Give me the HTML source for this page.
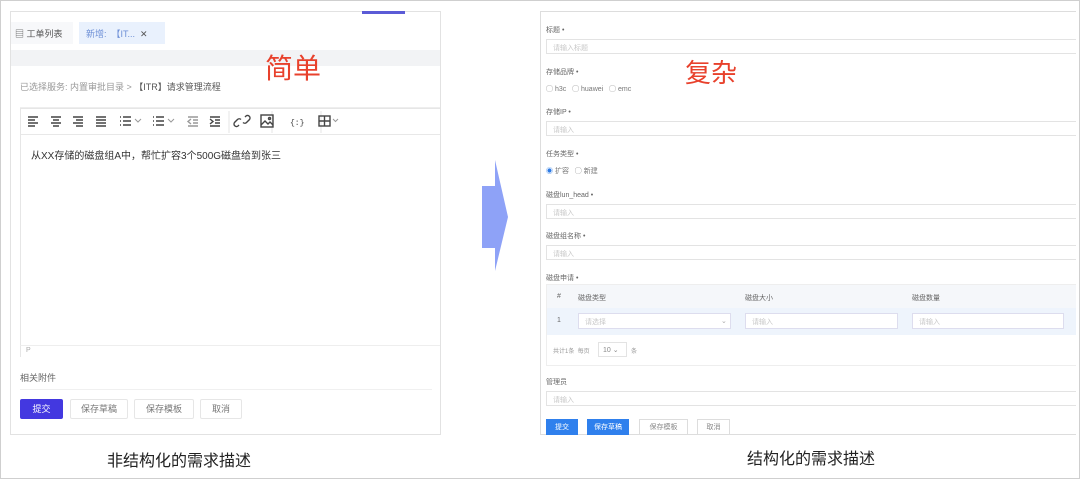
<!DOCTYPE html>
<html><head><meta charset="utf-8"><style>
*{box-sizing:border-box;margin:0;padding:0}
body{width:1080px;height:479px;background:#fff;position:relative;overflow:hidden;font-family:"Liberation Sans","Noto Sans CJK SC",sans-serif;color:#555}
.a{position:absolute}
.frame{left:0;top:0;width:1080px;height:479px;border:1px solid #cfcfcf}
.lp{left:10px;top:11px;width:431px;height:424px;border:1px solid #e2e2e2;background:#fff}
.rp{left:540px;top:11px;width:536px;height:424px;border:1px solid #ddd;border-right:none;background:#fff}
.t{font-size:8px;color:#666;white-space:nowrap}
.inp{height:15px;border:1px solid #e3e3e3;border-right:none;left:546px;width:530px;background:#fff}
.ph{font-size:7px;color:#c8c8c8;position:absolute;left:6px;top:3px}
.btn{height:20px;border:1px solid #e6e6e6;border-radius:2px;font-size:9px;color:#777;text-align:center;line-height:18px}
.rb{height:16px;font-size:7px;text-align:center;line-height:16px;border:1px solid #ddd;color:#888}
</style></head><body>
<div class="a frame"></div>
<!-- left panel -->
<div class="a lp"></div>
<div class="a" style="left:362px;top:11px;width:43px;height:3px;background:#5b5bd6"></div>
<div class="a" style="left:11px;top:22px;width:62px;height:22px;background:#f7f8fa"></div>
<div class="a t" style="left:15px;top:27px;font-size:9px;color:#555">▤ 工单列表</div>
<div class="a" style="left:79px;top:22px;width:86px;height:22px;background:#e9f1fd"></div>
<div class="a t" style="left:86px;top:27px;font-size:9px;color:#6d8fd6">新增: &nbsp;【IT... &nbsp;<span style="color:#555">✕</span></div>
<div class="a" style="left:11px;top:50px;width:429px;height:16px;background:#f2f3f5"></div>
<div class="a" style="left:265px;top:50px;font-size:28px;color:#e8412c;font-family:'Noto Sans CJK SC',sans-serif;line-height:34px">简单</div>
<div class="a t" style="left:20px;top:80px;font-size:9px;color:#999">已选择服务: 内置审批目录 &gt; <span style="color:#555">【ITR】请求管理流程</span></div>
<div class="a" style="left:20px;top:98px;width:420px;height:10px;border-bottom:1px solid #eee"></div>
<div class="a" style="left:20px;top:108px;width:420px;height:238px;border:1px solid #e6e6e6;border-right:none"></div>
<div class="a" style="left:21px;top:109px;width:419px;height:26px;border-bottom:1px solid #e8e8e8"></div>
<svg class="a" style="left:20px;top:108px" width="420" height="28" viewBox="0 0 420 28" stroke="#444" stroke-width="1.4" fill="none">
<g transform="translate(8,8)"><path d="M0 1h10M0 4h7M0 7h10M0 10h7"/></g>
<g transform="translate(31,8)"><path d="M0 1h10M2 4h6M0 7h10M2 10h6"/></g>
<g transform="translate(53,8)"><path d="M0 1h10M3 4h7M0 7h10M3 10h7"/></g>
<g transform="translate(76,8)"><path d="M0 1h10M0 4h10M0 7h10M0 10h10"/></g>
<g transform="translate(100,8)"><path d="M0 1h1M3 1h8M0 5h1M3 5h8M0 9h1M3 9h8"/><path d="M15 3l3 3 3-3" stroke="#999" stroke-width="1"/></g>
<g transform="translate(133,8)"><path d="M0 1h1M3 1h8M0 5h1M3 5h8M0 9h1M3 9h8"/><path d="M15 3l3 3 3-3" stroke="#999" stroke-width="1"/></g>
<g transform="translate(168,8)" stroke="#999"><path d="M0 1h10M5 4h5M5 7h5M0 10h10M3 3L0 5.5 3 8"/></g>
<g transform="translate(190,8)"><path d="M0 1h10M5 4h5M5 7h5M0 10h10M0 3l3 2.5L0 8"/></g>
<path d="M209 3v22M252 3v22M301 3v22" stroke="#e5e5e5" stroke-width="1"/>
<g transform="translate(216,6)"><path d="M3 11l-1 1a2.5 2.5 0 0 1-3.5-3.5l3-3a2.5 2.5 0 0 1 3.5 0M9 3l1-1a2.5 2.5 0 0 1 3.5 3.5l-3 3a2.5 2.5 0 0 1-3.5 0"/></g>
<g transform="translate(241,7)"><rect x="0" y="0" width="12" height="12"/><path d="M0 10l4-4 3 3 2-2 3 3"/><circle cx="8.5" cy="3.5" r="1"/></g>
<text x="270" y="17" font-size="8" fill="#444" stroke="none" font-family="Liberation Mono">{:}</text>
<g transform="translate(299,8)"><rect x="0" y="0" width="11" height="10"/><path d="M0 5h11M5.5 0v10"/><path d="M14 3l2.5 2.5L19 3" stroke="#999" stroke-width="1"/></g>
</svg>
<div class="a t" style="left:31px;top:147px;font-size:10px;color:#333">从XX存储的磁盘组A中，帮忙扩容3个500G磁盘给到张三</div>
<div class="a" style="left:20px;top:345px;width:420px;height:12px;border-top:1px solid #eee;border-left:1px solid #e6e6e6"></div>
<div class="a t" style="left:26px;top:347px;font-size:7px;color:#aaa">P</div>
<div class="a t" style="left:20px;top:371px;font-size:9px;color:#666">相关附件</div>
<div class="a" style="left:20px;top:389px;width:412px;border-top:1px solid #f0f0f0"></div>
<div class="a btn" style="left:20px;top:399px;width:43px;background:#4338e0;border-color:#4338e0;color:#fff">提交</div>
<div class="a btn" style="left:70px;top:399px;width:58px">保存草稿</div>
<div class="a btn" style="left:134px;top:399px;width:60px">保存模板</div>
<div class="a btn" style="left:200px;top:399px;width:42px">取消</div>
<div class="a" style="left:107px;top:447px;font-size:16px;color:#222">非结构化的需求描述</div>
<!-- arrow -->
<svg class="a" style="left:478px;top:158px" width="34" height="115"><path d="M4 28h13V2l13 57-13 54V90H4z" fill="#8ea2f7"/></svg>
<!-- right panel -->
<div class="a rp"></div>
<div class="a" style="left:685px;top:55px;font-size:26px;color:#e8412c;font-family:'Noto Sans CJK SC',sans-serif;line-height:34px">复杂</div>
<div class="a t" style="left:546px;top:25px;font-size:7px">标题 •</div>
<div class="a inp" style="top:39px"><span class="ph">请输入标题</span></div>
<div class="a t" style="left:546px;top:67px;font-size:7px">存储品牌 •</div>
<div class="a t" style="left:546px;top:84px;font-size:7px;color:#777">◯ h3c &nbsp; ◯ huawei &nbsp; ◯ emc</div>
<div class="a t" style="left:546px;top:107px;font-size:7px">存储IP •</div>
<div class="a inp" style="top:121px"><span class="ph">请输入</span></div>
<div class="a t" style="left:546px;top:149px;font-size:7px">任务类型 •</div>
<div class="a t" style="left:546px;top:166px;font-size:7px;color:#777"><span style="color:#2d7be5">◉</span> 扩容 &nbsp; ◯ 新建</div>
<div class="a t" style="left:546px;top:190px;font-size:7px">磁盘lun_head •</div>
<div class="a inp" style="top:204px"><span class="ph">请输入</span></div>
<div class="a t" style="left:546px;top:231px;font-size:7px">磁盘组名称 •</div>
<div class="a inp" style="top:245px"><span class="ph">请输入</span></div>
<div class="a t" style="left:546px;top:273px;font-size:7px">磁盘申请 •</div>
<div class="a" style="left:546px;top:284px;width:530px;height:82px;border:1px solid #eee;border-right:none"></div>
<div class="a" style="left:547px;top:285px;width:529px;height:23px;background:#f5f7fa"></div>
<div class="a t" style="left:557px;top:293px;font-size:7px">#</div>
<div class="a t" style="left:578px;top:293px;font-size:7px">磁盘类型</div>
<div class="a t" style="left:745px;top:293px;font-size:7px">磁盘大小</div>
<div class="a t" style="left:912px;top:293px;font-size:7px">磁盘数量</div>
<div class="a" style="left:547px;top:308px;width:529px;height:27px;background:#eef4fc"></div>
<div class="a t" style="left:557px;top:317px;font-size:7px">1</div>
<div class="a" style="left:578px;top:313px;width:153px;height:16px;border:1px solid #dde;background:#fff"><span class="ph">请选择</span><span class="ph" style="left:142px;color:#aaa">⌄</span></div>
<div class="a" style="left:745px;top:313px;width:153px;height:16px;border:1px solid #dde;background:#fff"><span class="ph">请输入</span></div>
<div class="a" style="left:912px;top:313px;width:152px;height:16px;border:1px solid #dde;background:#fff"><span class="ph">请输入</span></div>
<div class="a t" style="left:553px;top:346px;font-size:6px;color:#999">共计1条 &nbsp;每页</div>
<div class="a" style="left:598px;top:342px;width:29px;height:15px;border:1px solid #e3e3e3"><span class="ph" style="color:#888;left:4px">10 ⌄</span></div>
<div class="a t" style="left:631px;top:346px;font-size:6px;color:#999">条</div>
<div class="a t" style="left:546px;top:377px;font-size:7px">管理员</div>
<div class="a inp" style="top:391px"><span class="ph">请输入</span></div>
<div class="a rb" style="left:546px;top:419px;width:32px;background:#2f80ed;border-color:#2f80ed;color:#fff">提交</div>
<div class="a rb" style="left:587px;top:419px;width:42px;background:#2f80ed;border-color:#2f80ed;color:#fff">保存草稿</div>
<div class="a rb" style="left:639px;top:419px;width:49px">保存模板</div>
<div class="a rb" style="left:697px;top:419px;width:33px">取消</div>
<div class="a" style="left:747px;top:445px;font-size:16px;color:#222">结构化的需求描述</div>
</body></html>
